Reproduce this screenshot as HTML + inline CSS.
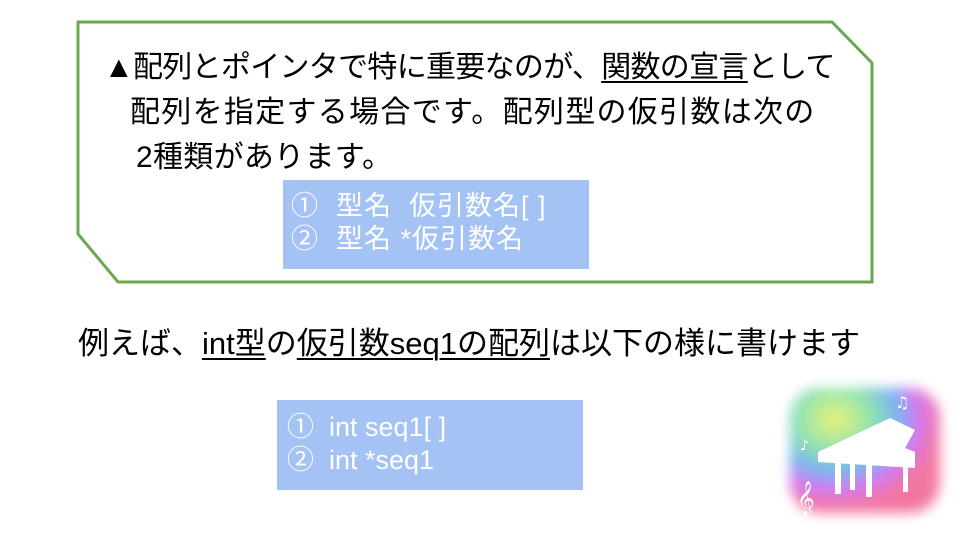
<!DOCTYPE html>
<html><head><meta charset="utf-8"><style>
body{margin:0;width:960px;height:540px;background:#fff;position:relative;overflow:hidden;font-family:"Liberation Sans","Noto Sans CJK JP",sans-serif;}
.t{position:absolute;white-space:nowrap;color:#000;font-size:30px;letter-spacing:0.3px;line-height:36px}
u{text-decoration:underline;text-underline-offset:4px;text-decoration-thickness:2px}
.b{position:absolute;background:#a4c2f4;color:#fff;font-size:27px;box-sizing:border-box}
</style></head><body>
<svg style="position:absolute;left:0;top:0" width="960" height="540">
<polygon points="78,22 832,22 872,63 872,282 118,282 78,234" fill="none" stroke="#6aa84f" stroke-width="3"/>
<defs><radialGradient id="g1" cx="30%" cy="25%" r="70%"><stop offset="0" stop-color="#e8f060"/><stop offset=".35" stop-color="#7ee0a0"/><stop offset=".6" stop-color="#60a8f0"/><stop offset=".8" stop-color="#d060f0"/><stop offset="1" stop-color="#f06090"/></radialGradient>
<filter id="bl"><feGaussianBlur stdDeviation="6"/></filter></defs>
<rect x="790" y="388" width="150" height="125" rx="30" fill="url(#g1)" filter="url(#bl)" opacity=".85"/>
<path d="M818,452 L890,418 L915,430 L905,448 L915,452 L915,468 L818,462 Z" fill="#fff"/>
<rect x="835" y="462" width="6" height="32" fill="#fff"/><rect x="850" y="462" width="5" height="28" fill="#fff"/><rect x="866" y="462" width="6" height="35" fill="#fff"/><rect x="903" y="462" width="5" height="30" fill="#fff"/>
<text x="797" y="508" fill="#fff" font-size="30" font-family="DejaVu Sans">𝄞</text>
<text x="895" y="408" fill="#fff" font-size="16" font-family="DejaVu Sans">♫</text>
<text x="800" y="450" fill="#fff" font-size="14" font-family="DejaVu Sans">♪</text>
</svg>
<div class="t" style="left:104px;top:50px;letter-spacing:-0.7px">▲配列とポインタで特に重要なのが、<u>関数の宣言</u>として</div>
<div class="t" style="left:130px;top:95px;letter-spacing:1.3px">配列を指定する場合です。配列型の仮引数は次の</div>
<div class="t" style="left:136px;top:140px">2種類があります。</div>
<div class="b" style="left:283px;top:180px;width:306px;height:89px;line-height:33px;padding:10px 8px;letter-spacing:1px">①&nbsp; 型名&nbsp; 仮引数名[ ]<br>②&nbsp; 型名 *仮引数名</div>
<div class="t" style="left:78px;top:326px;font-size:31px;letter-spacing:0">例えば、<u>int型</u>の<u>仮引数seq1の配列</u>は以下の様に書けます</div>
<div class="b" style="left:277px;top:400px;width:306px;height:90px;line-height:33px;padding:11px 10px">①&nbsp; int seq1[ ]<br>②&nbsp; int *seq1</div>
</body></html>
